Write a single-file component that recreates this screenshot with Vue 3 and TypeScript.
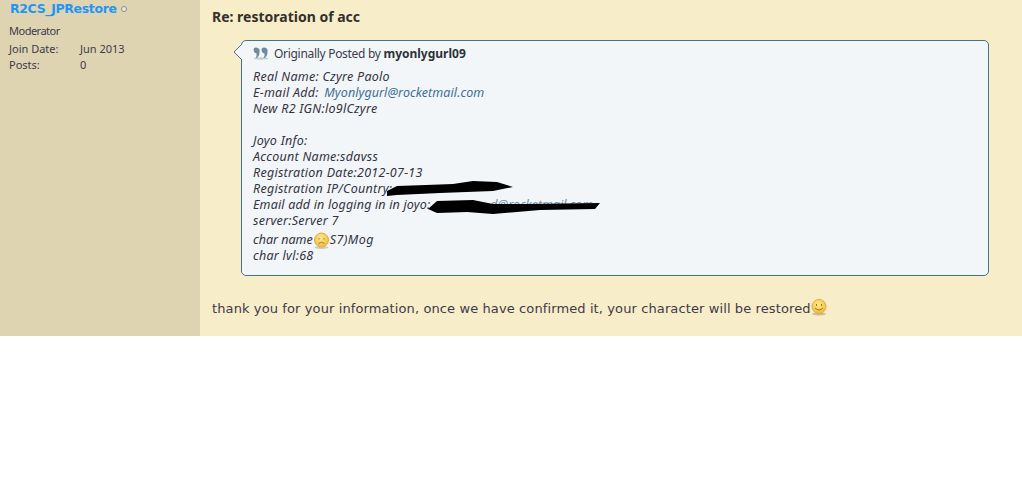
<script setup lang="ts">
</script>

<template>
  <div class="page">
    <aside class="side">
      <div class="name-row"><a class="name">R2CS_JPRestore</a><span class="dot"></span></div>
      <div class="role">Moderator</div>
      <dl class="info">
        <dt>Join Date:</dt><dd>Jun 2013</dd>
        <dt>Posts:</dt><dd>0</dd>
      </dl>
    </aside>
    <main class="main">
      <h2 class="title">Re: restoration of acc</h2>
      <div class="quote">
        <svg class="arrow" width="10" height="20" viewBox="0 0 10 20">
          <path d="M9 1 L1 9 L9 17" fill="#f2f6f9" stroke="#417394" stroke-width="1" />
        </svg>
        <div class="by">
          <svg class="qicon" width="16" height="13" viewBox="0 0 16 13">
            <ellipse cx="8" cy="11.500" rx="7.500" ry="1.200" fill="#c3ccd2" />
            <path d="M.5 2.500q0-2 2.500-2t3.500 2v2.500q0 4-3 6h-1q1.500-2 1-4.500q-3-.5-3-4z" fill="#6d8a9e" />
            <path d="M8.500 2.500q0-2 2.500-2t3.500 2v2.500q0 4-3 6h-1q1.500-2 1-4.500q-3-.5-3-4z" fill="#6d8a9e" />
          </svg>
          <span class="by-text">Originally Posted by <b>myonlygurl09</b></span>
        </div>
        <div class="msg">
          <div>Real Name: Czyre Paolo</div>
          <div>E-mail Add: <a class="mail">Myonlygurl@rocketmail.com</a></div>
          <div>New R2 IGN:lo9lCzyre</div>
          <div class="blank"></div>
          <div>Joyo Info:</div>
          <div>Account Name:sdavss</div>
          <div>Registration Date:2012-07-13</div>
          <div class="red">Registration IP/Country:
            <svg class="ink ink1" width="130" height="16" viewBox="0 0 130 16">
              <path d="M1 10 L11 5 L40 4 L67 3 L87 0 L111 1 L127 6 L107 10 L54 12 L11 14 L1 15Z" fill="#000" />
            </svg>
          </div>
          <div class="red tight">Email add in logging in in joyo:<span class="under">d@rocketmail.com</span>
            <svg class="ink ink2" width="174" height="18" viewBox="0 0 174 18">
              <path d="M0 12 L9 4 L45 3 L65 7 L99 7 L172 6 L167 12 L112 13 L65 17 L39 15 L9 16Z" fill="#000" />
            </svg>
          </div>
          <div>server:Server 7</div>
          <div class="charline"><span class="before">char name</span><svg class="smile" width="17" height="17" viewBox="0 0 17 17">
              <defs>
                <radialGradient id="frownFace" cx="45%" cy="35%" r="70%">
                  <stop offset="0" stop-color="#fde98f" />
                  <stop offset="1" stop-color="#f0b93a" />
                </radialGradient>
              </defs>
              <ellipse cx="8.500" cy="15.500" rx="7" ry="1.500" fill="#c8ccc8" />
              <circle cx="8.500" cy="8" r="7" fill="url(#frownFace)" stroke="#e0ae38" />
              <path d="M6 6v1.500M11 6v1.500" stroke="#a9802a" />
              <path d="M5.500 11.500q3-2.500 6 0" fill="none" stroke="#a9802a" />
            </svg><span class="after">S7)Mog</span></div>
          <div>char lvl:68</div>
        </div>
      </div>
      <p class="reply">thank you for your information, once we have confirmed it, your character will be restored<svg class="smile" width="16" height="17" viewBox="0 0 16 17">
          <defs>
            <radialGradient id="smileFace" cx="45%" cy="35%" r="70%">
              <stop offset="0" stop-color="#fde98f" />
              <stop offset="1" stop-color="#f0b93a" />
            </radialGradient>
          </defs>
          <ellipse cx="8" cy="15" rx="7" ry="1.500" fill="#c9bc98" />
          <circle cx="8" cy="7.500" r="7" fill="url(#smileFace)" stroke="#e0ae38" />
          <path d="M5.500 5v2M10.500 5v2" stroke="#9a7624" />
          <path d="M4 9q4 4 8 0" fill="none" stroke="#9a7624" />
        </svg></p>
    </main>
  </div>
</template>

<style>
html, body { margin: 0; background: #fff; }
</style>

<style scoped>
.page {
  display: flex;
  width: 1022px;
  height: 336px;
  font-family: "Noto Sans", Tahoma, sans-serif;
  color: #3e3a4a;
}
.side {
  width: 200px;
  flex: none;
  background: #ded4b2;
  padding: 0 0 0 9px;
  box-sizing: border-box;
  font-size: 11px;
  line-height: 16px;
}
.name-row {
  display: flex;
  align-items: center;
  gap: 4px;
  padding: 0 0 0 1px;
  height: 17px;
}
.name {
  color: #1e96f5;
  font: bold 12.5px/16px "DejaVu Sans", sans-serif;
  letter-spacing: -0.35px;
}
.dot {
  width: 4px;
  height: 4px;
  border-radius: 50%;
  border: 1px solid #8f8f88;
  background: #e8e8e8;
}
.role { margin-top: 6px; letter-spacing: -0.5px; }
.info {
  display: grid;
  grid-template-columns: 71px 1fr;
  margin: 2px 0 0;
}
.info dd { margin: 0; }
.main {
  flex: 1;
  background: #f8edc9;
  padding: 8px 33px 0 12px;
  min-width: 0;
}
.title {
  margin: 0;
  font: bold 14px/17px "Noto Sans", sans-serif;
  color: #33302c;
}
.quote {
  position: relative;
  margin: 15px 0 0 29px;
  height: 236px;
  box-sizing: border-box;
  background: #f2f6f9;
  border: 1px solid #417394;
  border-radius: 5px;
  padding: 3px 11px;
  font-size: 13px;
  line-height: 16px;
}
.arrow {
  position: absolute;
  left: -9px;
  top: 2px;
}
.by {
  display: flex;
  align-items: center;
  gap: 5px;
  height: 20px;
  font-size: 12px;
  margin-bottom: 5px;
}
.by-text { letter-spacing: -0.3px; }
.by b { color: #2d3238; letter-spacing: 0; }
.qicon { margin-top: -1px; }
.msg { font-style: italic; color: #33333d; font-size: 12.5px; letter-spacing: 0.27px; }
.blank { height: 16px; }
.mail { color: #3d6f94; letter-spacing: 0.08px; margin-left: 2px; }
.red { position: relative; white-space: pre-wrap; }
.tight { letter-spacing: 0.17px; }
.under { color: #3d6f94; opacity: 0.75; margin-left: 60px; letter-spacing: 0; }
.ink { position: absolute; }
.ink1 { left: 133px; top: 0; }
.ink2 { left: 175px; top: 0; }
.charline { display: flex; align-items: center; height: 16px; margin-top: 3px; }
.before { letter-spacing: 0; }
.smile { flex: none; vertical-align: -3px; }
.after { letter-spacing: 0.4px; }
.reply {
  margin: 23px 0 0;
  font: 13px/18px "DejaVu Sans", sans-serif;
  letter-spacing: 0.11px;
}
</style>
